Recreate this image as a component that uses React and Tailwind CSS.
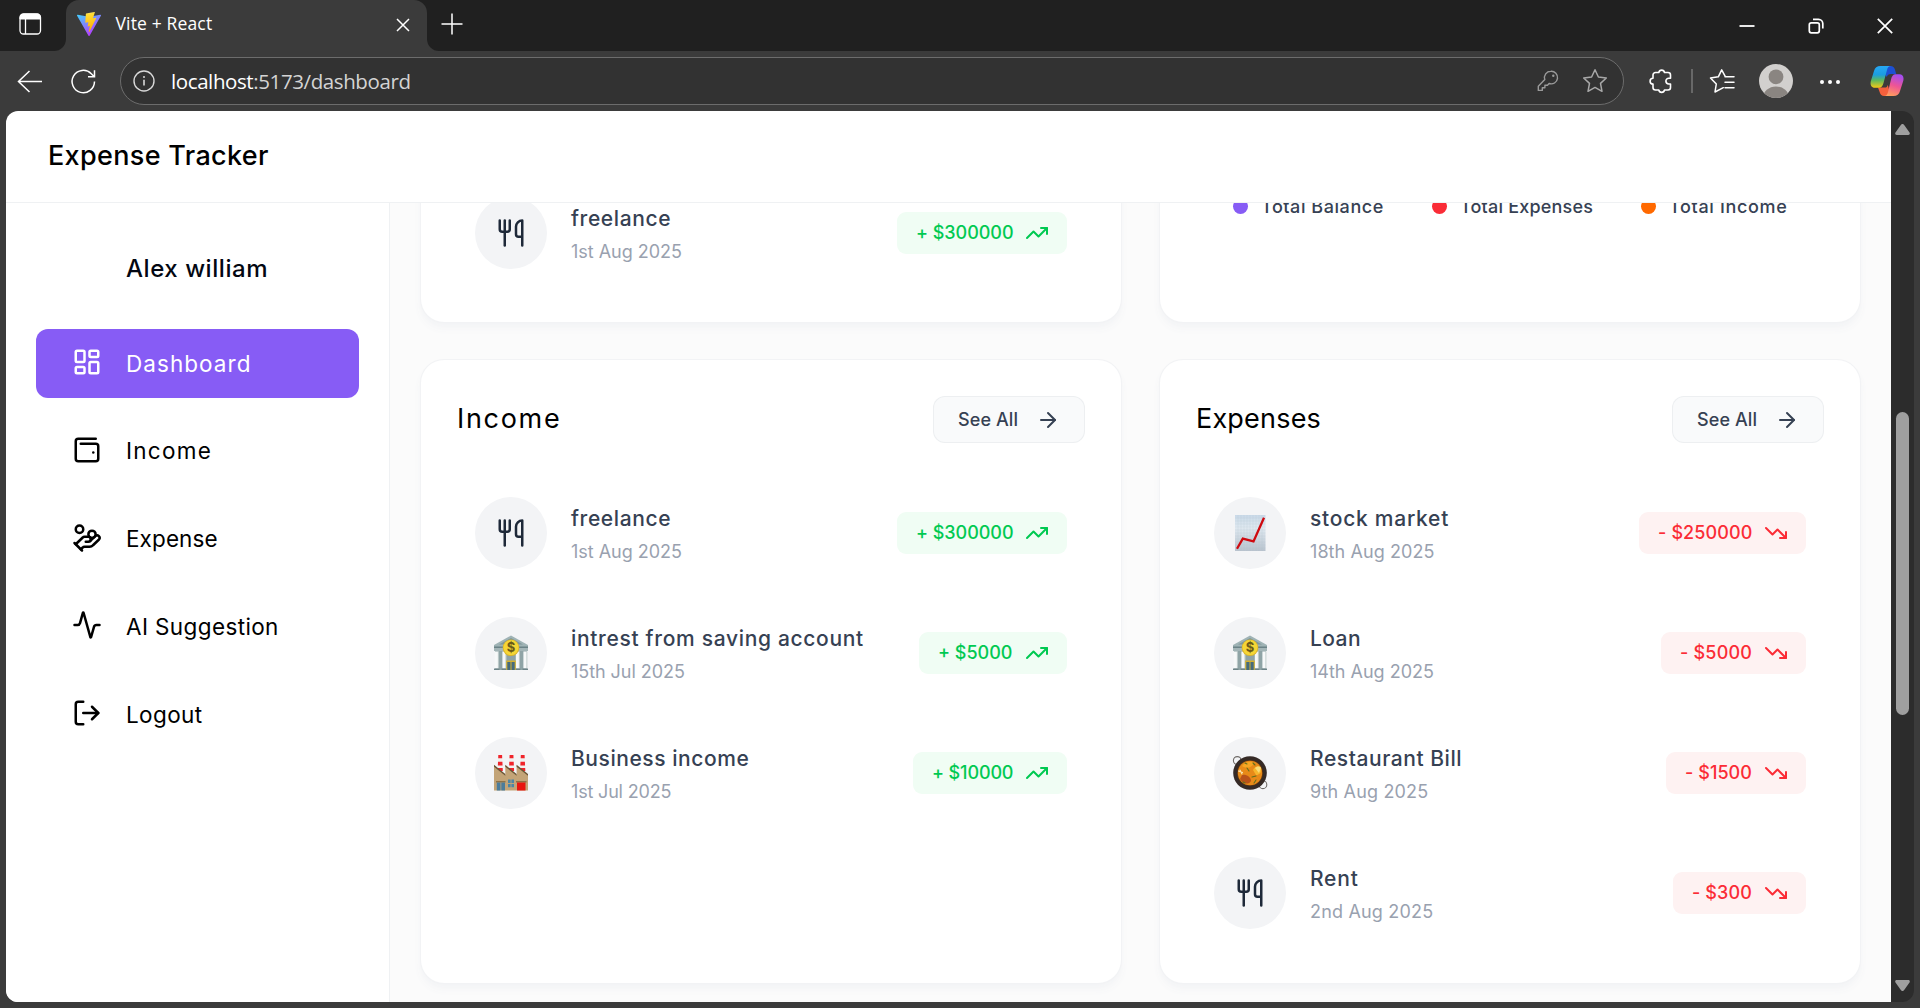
import React from "react";
import {
  Activity,
  ArrowRight,
  HandCoins,
  LayoutDashboard,
  LogOut,
  TrendingDown,
  TrendingUp,
  Utensils,
  WalletMinimal,
} from "lucide-react";

const NAV = [
  { label: "Dashboard", Icon: LayoutDashboard, tracking: "tracking-[1.050px]", active: true },
  { label: "Income", Icon: WalletMinimal, tracking: "tracking-[1.250px]" },
  { label: "Expense", Icon: HandCoins, tracking: "tracking-[0.100px]" },
  { label: "AI Suggestion", Icon: Activity, tracking: "tracking-[0.380px]" },
  { label: "Logout", Icon: LogOut, tracking: "tracking-[0.400px]" },
];

const INCOME = [
  { icon: "utensils", title: "freelance", tt: "tracking-[0.600px]", date: "1st Aug 2025", dt: "tracking-[-0.030px]", amount: "$300000", width: "w-[170px]", at: "tracking-[-0.040px]" },
  { icon: "bank", title: "intrest from saving account", tt: "tracking-[0.680px]", date: "15th Jul 2025", dt: "tracking-[-0.050px]", amount: "$5000", width: "w-[148px]", at: "tracking-[0px]" },
  { icon: "factory", title: "Business income", tt: "tracking-[0.560px]", date: "1st Jul 2025", dt: "tracking-[-0.180px]", amount: "$10000", width: "w-[154px]", at: "tracking-[-0.130px]" },
];

const EXPENSES = [
  { icon: "chart", title: "stock market", tt: "tracking-[0.740px]", date: "18th Aug 2025", dt: "tracking-[0.080px]", amount: "$250000", width: "w-[167px]", at: "tracking-[0.120px]" },
  { icon: "bank", title: "Loan", tt: "tracking-[0.400px]", date: "14th Aug 2025", dt: "tracking-[0px]", amount: "$5000", width: "w-[145px]", at: "tracking-[0.200px]" },
  { icon: "pan", title: "Restaurant Bill", tt: "tracking-[0.560px]", date: "9th Aug 2025", dt: "tracking-[0.150px]", amount: "$1500", width: "w-[140px]", at: "tracking-[0.050px]" },
  { icon: "utensils", title: "Rent", tt: "tracking-[0.800px]", date: "2nd Aug 2025", dt: "tracking-[0.180px]", amount: "$300", width: "w-[133px]", at: "tracking-[0.100px]" },
];

const LEGEND = [
  { label: "Total Balance", dot: "bg-[#875cf5]", tracking: "tracking-[0.560px]", width: "w-[199px]" },
  { label: "Total Expenses", dot: "bg-[#fa2c37]", tracking: "tracking-[0.200px]", width: "w-[209px]" },
  { label: "Total Income", dot: "bg-[#ff6900]", tracking: "tracking-[0.660px]", width: "w-[148px]" },
];

function Bank() {
  return (
    <svg viewBox="0 0 36 36" className="size-9">
      <rect x="2" y="11" width="32" height="24" fill="#8fa4a6" />
      <path d="M18 .5 35 10v2H1v-2Z" fill="#9fb3b5" />
      <path d="M18 3 30 9.600H6Z" fill="#7f969a" />
      <rect x="1" y="11.500" width="34" height="1.500" fill="#6b8387" />
      <rect x="1" y="13" width="34" height="3" fill="#a3b5b7" />
      <path d="M1.800 16.500h3.800v17H1.800ZM9.400 16.500h3.800v17H9.400ZM22.800 16.500h3.800v17h-3.800ZM30.400 16.500h3.800v17h-3.800Z" fill="#f7f9f9" />
      <path d="M4.900 16.500h.8v17h-.8ZM12.500 16.500h.8v17h-.8ZM25.900 16.500h.8v17h-.8ZM33.500 16.500h.8v17h-.8Z" fill="#b5c3c4" />
      <rect x="13.200" y="25.500" width="9.600" height="9.500" fill="#d4b231" />
      <rect x="14.300" y="27" width="3.200" height="8" fill="#456b7c" />
      <rect x="18.500" y="27" width="3.200" height="8" fill="#456b7c" />
      <path d="M1 33.500h5.400V35H1ZM8.700 33.500h4.500V35H8.700ZM22.800 33.500h4.500V35h-4.500ZM29.600 33.500H35V35h-5.400Z" fill="#6e8488" />
      <circle cx="18" cy="12.800" r="8.300" fill="#dcb52a" />
      <circle cx="18" cy="12.600" r="7.500" fill="#f5d636" />
      <text x="18" y="17.300" textAnchor="middle" fontFamily="Inter, sans-serif" fontSize="13" fontWeight="700" fill="#6b5a18">$</text>
    </svg>
  );
}

function Factory() {
  return (
    <svg viewBox="0 0 36 36" className="size-9">
      {[4.700, 16, 27.200].map((x) => (
        <g key={x}>
          <path d={`M${x + 0.6} 0h3.800l.8 16h-5.400Z`} fill="#f1efee" />
          <path d={`M${x + 0.6} 0h3.800l.1 3.300h-4ZM${x + 0.3} 6.800h4.400l.15 3.600h-4.700ZM${x} 13h5l.1 3h-5.200Z`} fill="#f0242b" />
        </g>
      ))}
      <path d="M1 10.500 12.300 20v-9.500L23.600 20v-9.500L35 20v15.500H1Z" fill="#c3a477" />
      <path d="M1 9.800 12.300 19v1.800L1 11.800ZM12.300 9.800 23.600 19v1.800L12.300 11.800ZM23.600 9.800 35 19v1.800L23.600 11.800Z" fill="#6b5535" />
      <rect x="3" y="26" width="9.500" height="1.500" fill="#8c7147" />
      <path d="M3.800 27.500h3.700v8H3.800ZM8.300 27.500H12v8H8.300Z" fill="#4b7c9b" />
      <path d="M15 24.500h2.600v3.400H15ZM18.400 24.500H21v3.400h-2.600ZM15 28.900h2.600v3.400H15ZM18.400 28.900H21v3.400h-2.600Z" fill="#4b86a6" />
      <rect x="23" y="26" width="10.500" height="1.500" fill="#8c7147" />
      <rect x="24" y="27.500" width="8.500" height="8" fill="#e8150f" />
    </svg>
  );
}

function Chart() {
  return (
    <svg viewBox="0 0 36 36" className="size-9">
      <defs>
        <linearGradient id="paper" x1="0" y1="0" x2="0" y2="1">
          <stop offset="0" stopColor="#c9d9e8" />
          <stop offset=".35" stopColor="#e0e9f1" />
          <stop offset="1" stopColor="#b9c3ce" />
        </linearGradient>
      </defs>
      <rect x="3" y="0" width="30.500" height="36" fill="url(#paper)" />
      <path d="M6 0v36M9 0v36M12 0v36M15 0v36M18 0v36M21 0v36M24 0v36M27 0v36M30 0v36M3 3h30.500M3 6h30.500M3 9h30.500M3 12h30.500M3 15h30.500M3 18h30.500M3 21h30.500M3 24h30.500M3 27h30.500M3 30h30.500M3 33h30.500" stroke="#a8bccd" strokeOpacity=".5" strokeWidth=".4" />
      <path d="m5 33.800 5.800-10.100 10.700 2.700L32 2.800" fill="none" stroke="#cf0a10" strokeWidth="2.300" />
    </svg>
  );
}

function Pan() {
  return (
    <svg viewBox="0 0 36 36" className="size-9">
      <circle cx="5.300" cy="5.500" r="3.900" fill="none" stroke="#6f6b68" strokeWidth="1.100" />
      <circle cx="30.900" cy="29.700" r="3.900" fill="none" stroke="#6f6b68" strokeWidth="1.100" />
      <circle cx="18" cy="18" r="16.800" fill="#352a26" />
      <circle cx="18" cy="18" r="13" fill="#5a3414" />
      <circle cx="18" cy="18" r="12.200" fill="#e88a18" />
      <path d="M10 11c4-5 9-5 12-3-2 5-8 6-12 3Z" fill="#f6a623" />
      <path d="M21 15c2-4 6-5 8-2 1 5-2 7-5 7Z" fill="#f7b52c" />
      <path d="M23 13c2-2 5-2 6 0l-2 5Z" fill="#f9dc77" />
      <path d="M10 20c4-1 9 2 9 6-3 5-9 2-11-2Z" fill="#b9531a" />
      <path d="m6.500 16 4 1.500M8 15l2 4" stroke="#fae6b1" strokeWidth="1.100" strokeLinecap="round" />
      <path d="m15 13 2 3M21 8l2 2M20 22l4-1M24 25l-2 3M11 27l2 1M13 8l2 1" stroke="#61701c" strokeWidth="1.100" strokeLinecap="round" />
    </svg>
  );
}

function RowIcon({ name }) {
  if (name === "bank") return <Bank />;
  if (name === "factory") return <Factory />;
  if (name === "chart") return <Chart />;
  if (name === "pan") return <Pan />;
  return <Utensils size={30} className="text-gray-800" />;
}

function Row({ item, up }) {
  const Trend = up ? TrendingUp : TrendingDown;
  return (
    <div className="flex items-center gap-6 p-[18px]">
      <div className="flex size-[72px] shrink-0 items-center justify-center rounded-full bg-gray-100">
        <RowIcon name={item.icon} />
      </div>
      <div className="flex flex-1 items-center justify-between">
        <div className="whitespace-nowrap">
          <p className={`text-[21px] leading-[33px] font-medium text-gray-700 ${item.tt}`}>{item.title}</p>
          <p className={`mt-[3px] text-[18px] leading-[27px] text-gray-400 ${item.dt}`}>{item.date}</p>
        </div>
        <div className={`flex h-[42px] shrink-0 items-center justify-between rounded-[9px] pr-[18px] pl-[19px] ${item.width} ${up ? "bg-green-50 text-green-500" : "bg-red-50 text-red-500"}`}>
          <span className={`text-[18px] leading-6 font-medium whitespace-nowrap ${item.at}`}>
            {up ? "+" : "-"} {item.amount}
          </span>
          <Trend size={24} className="shrink-0" />
        </div>
      </div>
    </div>
  );
}

function Card({ title, tracking, items, up }) {
  return (
    <section className="h-[625px] rounded-3xl border border-gray-200/50 bg-white p-9 shadow-[0_6px_9px_-1.500px_#f3f4f6,0_3px_6px_-3px_#f3f4f6]">
      <div className="flex h-[47px] items-center justify-between">
        <h5 className={`text-[27px] text-black ${tracking}`}>{title}</h5>
        <button className="flex h-[47px] w-[152px] items-center justify-between rounded-xl border border-gray-200/60 bg-gray-50 pr-6 pl-[24px] text-[18px] font-medium tracking-[0.100px] text-gray-700">
          See All
          <ArrowRight size={24} />
        </button>
      </div>
      <div className="mt-9 flex flex-col gap-3">
        {items.map((item) => (
          <Row key={item.title} item={item} up={up} />
        ))}
      </div>
    </section>
  );
}

function TabStrip() {
  return (
    <div className="flex h-[51px] shrink-0 bg-[#202020] text-white">
      <div className="flex w-[66px] items-end bg-[#3b3b3b]">
        <div className="flex h-full w-full items-center rounded-br-[12px] bg-[#202020] pl-[18px]">
          <svg viewBox="0 0 24 24" className="mt-[-3px] size-6" fill="none" stroke="currentColor">
            <rect x="2" y="2" width="20.500" height="20" rx="3.500" strokeWidth="1.300" />
            <path d="M2 7V5.500A3.500 3.500 0 0 1 5.500 2h13A3.500 3.500 0 0 1 22.500 5.500V7Z" fill="currentColor" />
            <path d="M7.500 7v15" strokeWidth="1.300" />
          </svg>
        </div>
      </div>
      <div className="flex w-[361px] bg-[#202020]">
        <div className="flex h-full w-full items-center rounded-t-[13px] bg-[#3b3b3b] pr-[15px] pl-[11px]">
          <svg viewBox="0 0 24 24" className="mt-[-3px] size-6">
            <defs>
              <linearGradient id="viteShell" x1="0" y1="0" x2=".6" y2="1">
                <stop offset="0" stopColor="#41d1ff" />
                <stop offset="1" stopColor="#bd34fe" />
              </linearGradient>
              <linearGradient id="viteBolt" x1=".4" y1="0" x2=".5" y2="1">
                <stop offset="0" stopColor="#ffea83" />
                <stop offset=".1" stopColor="#ffdd35" />
                <stop offset="1" stopColor="#ffa800" />
              </linearGradient>
            </defs>
            <path d="M23.900 3.700 12.600 23.800a.6.600 0 0 1-1.100 0L.1 3.700a.6.600 0 0 1 .6-.9L12 4.800l11.300-2a.6.600 0 0 1 .6.900Z" fill="url(#viteShell)" />
            <path d="m17.400 0-8.300 1.600a.3.300 0 0 0-.25.300L8.300 10.500a.3.300 0 0 0 .38.300l2.300-.5a.3.300 0 0 1 .37.360l-.7 3.400a.3.300 0 0 0 .4.360l1.400-.43a.3.300 0 0 1 .4.360l-1.100 5.300c-.07.330.37.500.55.230l.12-.2 6.800-13.500a.3.300 0 0 0-.33-.44l-2.400.46a.3.300 0 0 1-.35-.4L17.800.4a.3.300 0 0 0-.36-.4Z" fill="url(#viteBolt)" />
          </svg>
          <span className="mt-[-4px] ml-[14.500px] font-['Open_Sans',sans-serif] text-[17.500px] tracking-[0.150px]">Vite + React</span>
          <svg viewBox="0 0 18 18" className="mt-[-1px] ml-auto size-[18px]" fill="none" stroke="currentColor" strokeWidth="1.500">
            <path d="m3 3 12 12M15 3 3 15" />
          </svg>
        </div>
      </div>
      <div className="flex w-[52px] bg-[#3b3b3b]">
        <div className="flex h-full w-full items-center rounded-bl-[12px] bg-[#202020] pl-[13px]">
          <svg viewBox="0 0 24 24" className="mt-[-4px] size-6" fill="none" stroke="currentColor" strokeWidth="1.500">
            <path d="M12 1.500v21M1.500 12h21" />
          </svg>
        </div>
      </div>
      <div className="ml-auto flex items-center gap-[51px] pr-[26px]">
        <svg viewBox="0 0 18 18" className="size-[18px]" stroke="currentColor" strokeWidth="1.800">
          <path d="M1.500 9h15" />
        </svg>
        <svg viewBox="0 0 18 18" className="size-[18px]" fill="none" stroke="currentColor" strokeWidth="1.700">
          <rect x="2.300" y="5.800" width="10" height="10" rx="2" />
          <path d="M6 2.300h5.500a4.300 4.300 0 0 1 4.300 4.300V11.500" />
        </svg>
        <svg viewBox="0 0 18 18" className="size-[18px]" fill="none" stroke="currentColor" strokeWidth="1.700">
          <path d="m1.800 1.800 14.400 14.400M16.200 1.800 1.800 16.200" />
        </svg>
      </div>
    </div>
  );
}

function Toolbar() {
  return (
    <div className="flex h-[60px] shrink-0 items-center bg-[#3b3b3b] text-white">
      <svg viewBox="0 0 27 27" className="ml-4 size-[27px]" fill="none" stroke="currentColor" strokeWidth="1.500">
        <path d="M26 13.500H2.500M13.500 3 2.500 13.500l11 10.500" />
      </svg>
      <svg viewBox="0 0 27 27" className="ml-[27px] size-[27px]" fill="none" stroke="currentColor" strokeWidth="1.500">
        <path d="M24.500 13.500a11.200 11.200 0 1 1-3.200-7.800l3 3M24.500 2.300v6.500H18" />
      </svg>
      <div className="ml-[23px] flex h-12 w-[1504px] items-center rounded-full border-[1.500px] border-[#6c6c6c] bg-[#323232] pr-[14px] pl-3">
        <svg viewBox="0 0 22 22" className="size-[22px] text-[#d8d8d8]" fill="none" stroke="currentColor" strokeWidth="1.400">
          <circle cx="11" cy="11" r="10" />
          <path d="M11 9.800v5.700" strokeWidth="1.600" />
          <circle cx="11" cy="6.900" r="1" fill="currentColor" stroke="none" />
        </svg>
        <span className="ml-4 font-['Open_Sans',sans-serif] text-[20.500px] tracking-[-0.400px] text-[#d4d4d4]">
          <span className="text-white">localhost</span>:5173/dashboard
        </span>
        <svg viewBox="0 0 24 24" className="ml-auto size-6 text-[#9a9a9a]" fill="none" stroke="currentColor" strokeWidth="1.400" strokeLinejoin="round">
          <path d="M14.800 2.300a6.300 6.300 0 0 0-6 8.300L2.300 17.200v4.200h4v-2.600h2.600v-2.600h2.600l1.600-1.700a6.300 6.300 0 1 0 1.700-12.200Z" />
          <circle cx="17.300" cy="6.800" r="1.200" fill="currentColor" stroke="none" />
        </svg>
        <svg viewBox="0 0 26 26" className="mr-[1px] ml-[22px] size-[26px] text-[#a8a8a8]" fill="none" stroke="currentColor" strokeWidth="1.500" strokeLinejoin="round">
          <path d="m13 1.800 3.400 7.200 7.900 1-5.800 5.400 1.500 7.900-7-3.900-7 3.900 1.500-7.900L1.700 10l7.900-1Z" />
        </svg>
      </div>
      <svg viewBox="0 0 26 26" className="ml-[24px] size-[26px]" fill="none" stroke="currentColor" strokeWidth="1.600" strokeLinejoin="round">
        <path d="M7.500 4.500h3.300a2.900 2.900 0 0 1 5.700 0H20a2.500 2.500 0 0 1 2.500 2.500v3.200h-1.700a2.900 2.900 0 0 0 0 5.800h1.700v3.500a2.500 2.500 0 0 1-2.500 2.500h-3.500a2.900 2.900 0 0 1-5.700 0H7.500A2.500 2.500 0 0 1 5 19.500v-3.400a2.900 2.900 0 0 1 0-5.800V7a2.500 2.500 0 0 1 2.500-2.500Z" />
      </svg>
      <div className="ml-[17px] h-6 w-[1.500px] bg-[#686868]" />
      <svg viewBox="0 0 26 26" className="ml-[16px] size-[26px]" fill="none" stroke="currentColor" strokeWidth="1.500" strokeLinejoin="round" strokeLinecap="round">
        <path d="M14.300 19.700 6 24l1.300-8L1.500 10l7.800-1.200L12.700 1.800l3.500 6.500M16 8.800h9M16 14.300h9M16 19.800h9" />
      </svg>
      <div className="ml-[24px] size-[34px] overflow-hidden rounded-full bg-[#d2d0ce]">
        <svg viewBox="0 0 34 34" className="size-full">
          <circle cx="17" cy="12.800" r="7.400" fill="#8a8581" />
          <ellipse cx="17" cy="34" rx="13" ry="11.600" fill="#8a8581" />
        </svg>
      </div>
      <div className="ml-[27px] flex gap-[4px] pt-[2px]">
        <span className="size-[4px] rounded-full bg-white" />
        <span className="size-[4px] rounded-full bg-white" />
        <span className="size-[4px] rounded-full bg-white" />
      </div>
      <svg viewBox="0 0 34 32" className="ml-[30px] h-8 w-[34px]">
        <defs>
          <linearGradient id="copilotLeft" x1="0" y1="0" x2="0" y2="1">
            <stop offset="0" stopColor="#27a8f5" />
            <stop offset=".4" stopColor="#1b9de0" />
            <stop offset=".65" stopColor="#5cb85f" />
            <stop offset="1" stopColor="#f6c914" />
          </linearGradient>
          <linearGradient id="copilotRight" x1=".6" y1="0" x2=".3" y2="1">
            <stop offset="0" stopColor="#a44df0" />
            <stop offset=".5" stopColor="#ef5594" />
            <stop offset="1" stopColor="#ffa05c" />
          </linearGradient>
        </defs>
        <path d="M18 1h2.500c2.500 0 3.700 1.200 4.400 3.500l1.300 4.500H21c-2.500 0-3.600 1-4.200 3L14 8Z" fill="#1d50d4" />
        <path d="M8 22.500h7c1.500 0 2.200-1 2.800-2.600L20 28c-.8 2-2 3-4 3h-2c-2.300 0-3.500-1.200-4.200-3.500Z" fill="#f4603c" />
        <path d="M10.500 1H21c-2.200 0-3.400 1.500-4 4l-3.500 13c-.8 3-2 4.800-4.500 4.800H5c-3.500 0-5-2.500-4.200-6.500L4 6c.9-3.400 3-5 6.500-5Z" fill="url(#copilotLeft)" />
        <path d="M23.500 31H14c2.200 0 3.400-1.500 4-4l3-12.500c.8-3.300 2-5.300 4.500-5.300h3.800c3.500 0 4.800 2.500 4 6.500L30 26c-.9 3.400-3 5-6.500 5Z" fill="url(#copilotRight)" />
      </svg>
    </div>
  );
}

function Sidebar() {
  return (
    <aside className="w-[384px] shrink-0 border-r border-gray-200/60 bg-white px-[30px] pt-12">
      <h5 className="pl-[90px] text-[24px] leading-9 font-medium tracking-[0.550px] text-gray-950">Alex william</h5>
      <nav className="mt-[42px] flex flex-col gap-[18.750px]">
        {NAV.map(({ label, Icon, tracking, active }) => (
          <a key={label} className={`flex h-[69px] w-[323px] items-center gap-6 rounded-xl px-9 text-[22.500px] ${tracking} ${active ? "bg-[#875cf5] text-white" : "text-black"}`}>
            <Icon size={30} className="mb-[3px] shrink-0" />
            {label}
          </a>
        ))}
      </nav>
    </aside>
  );
}

function Scrollbar() {
  return (
    <div className="flex w-[23px] shrink-0 flex-col items-center bg-[#2c2c2c] pt-[13px] pb-[11px]">
      <svg viewBox="0 0 15 11" className="h-[11px] w-[15px]" fill="#9f9f9f">
        <path d="M6 .8a1.800 1.800 0 0 1 3 0l5.500 7.700c.7 1.200.2 2.500-1.200 2.500H1.700C.3 11-.2 9.700.5 8.500Z" />
      </svg>
      <div className="mt-[277px] h-[303px] w-[13px] rounded-full bg-[#9f9f9f]" />
      <svg viewBox="0 0 15 11" className="mt-auto h-[11px] w-[15px]" fill="#9f9f9f">
        <path d="M6 10.200a1.800 1.800 0 0 0 3 0l5.500-7.700C15.200 1.300 14.700 0 13.300 0H1.700C.3 0-.2 1.300.5 2.500Z" />
      </svg>
    </div>
  );
}

export default function App() {
  return (
    <div className="flex h-[1008px] w-[1920px] flex-col overflow-hidden bg-[#3b3b3b] font-['Inter',sans-serif]">
      <TabStrip />
      <Toolbar />
      <div className="mx-1.5 flex h-[891px] overflow-hidden rounded-xl">
        <div className="flex flex-1 flex-col bg-white">
          <header className="flex h-[92px] shrink-0 items-center border-b border-gray-200/60 pl-[42px]">
            <h2 className="text-[27px] font-medium tracking-[0.330px] text-black">Expense Tracker</h2>
          </header>
          <div className="flex min-h-0 flex-1">
            <Sidebar />
            <main className="grid flex-1 grid-cols-2 content-end gap-x-[37px] gap-y-[36px] overflow-hidden bg-[#fbfbfb] px-[30px] pb-[18px]">
              <section className="flex h-[625px] flex-col justify-end rounded-3xl border border-gray-200/50 bg-white px-9 pb-[35px] shadow-[0_6px_9px_-1.500px_#f3f4f6,0_3px_6px_-3px_#f3f4f6]">
                <Row item={INCOME[0]} up />
              </section>
              <section className="flex h-[625px] items-end rounded-3xl border border-gray-200/50 bg-white pb-[102px] pl-[73px] shadow-[0_6px_9px_-1.500px_#f3f4f6,0_3px_6px_-3px_#f3f4f6]">
                {LEGEND.map((item) => (
                  <div key={item.label} className={`flex items-center gap-[13px] ${item.width}`}>
                    <span className={`size-[15px] shrink-0 rounded-full ${item.dot}`} />
                    <span className={`text-[18px] leading-[27px] font-medium whitespace-nowrap text-gray-700 ${item.tracking}`}>{item.label}</span>
                  </div>
                ))}
              </section>
              <Card title="Income" tracking="tracking-[1.700px]" items={INCOME} up />
              <Card title="Expenses" tracking="tracking-[0.200px]" items={EXPENSES} />
            </main>
          </div>
        </div>
        <Scrollbar />
      </div>
    </div>
  );
}
